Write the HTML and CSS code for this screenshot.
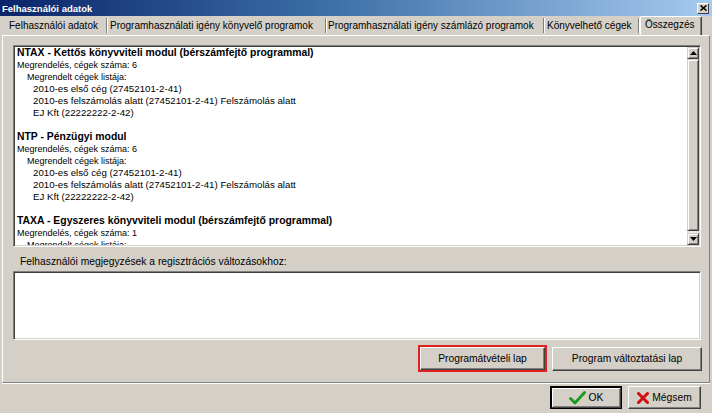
FILE: index.html
```html
<!DOCTYPE html>
<html lang="hu">
<head>
<meta charset="utf-8">
<title>Felhasználói adatok</title>
<link rel="stylesheet" href="styles.css">
</head>
<body>
<div class="window">
  <div class="titlebar">
    <span class="title">Felhasználói adatok</span>
    <span class="close">
      <svg width="7" height="6" viewBox="0 0 7 6"><path d="M0.5 0.5 L6.5 5.5 M6.5 0.5 L0.5 5.5" stroke="#000" stroke-width="1.6"/></svg>
    </span>
  </div>
  <div class="tabstrip">
    <div class="tab t1">Felhasználói adatok</div>
    <div class="tab t2">Programhasználati igény könyvelő programok</div>
    <div class="tab t3">Programhasználati igény számlázó programok</div>
    <div class="tab t4">Könyvelhető cégek</div>
    <div class="tab active">Összegzés</div>
  </div>
  <div class="page">
    <div class="summary">
      <div class="summary-text">
        <div class="line b">NTAX - Kettős könyvviteli modul (bérszámfejtő programmal)</div>
        <div class="line">Megrendelés, cégek száma: 6</div>
        <div class="line i1">Megrendelt cégek listája:</div>
        <div class="line i2">2010-es első cég (27452101-2-41)</div>
        <div class="line i2">2010-es felszámolás alatt (27452101-2-41) Felszámolás alatt</div>
        <div class="line i2">EJ Kft (22222222-2-42)</div>
        <div class="line"></div>
        <div class="line b">NTP - Pénzügyi modul</div>
        <div class="line">Megrendelés, cégek száma: 6</div>
        <div class="line i1">Megrendelt cégek listája:</div>
        <div class="line i2">2010-es első cég (27452101-2-41)</div>
        <div class="line i2">2010-es felszámolás alatt (27452101-2-41) Felszámolás alatt</div>
        <div class="line i2">EJ Kft (22222222-2-42)</div>
        <div class="line"></div>
        <div class="line b">TAXA - Egyszeres könyvviteli modul (bérszámfejtő programmal)</div>
        <div class="line">Megrendelés, cégek száma: 1</div>
        <div class="line i1">Megrendelt cégek listája:</div>
      </div>
      <div class="scrollbar">
        <div class="sbtn"><svg width="7" height="4" viewBox="0 0 7 4"><path d="M3.5 0 L7 4 L0 4 Z" fill="#000"/></svg></div>
        <div class="track"><div class="thumb"></div></div>
        <div class="sbtn"><svg width="7" height="4" viewBox="0 0 7 4"><path d="M0 0 L7 0 L3.5 4 Z" fill="#000"/></svg></div>
      </div>
    </div>
    <div class="note-label">Felhasználói megjegyzések a regisztrációs változásokhoz:</div>
    <div class="note"></div>
    <div class="actions">
      <div class="highlight"><button class="btn wide1">Programátvételi lap</button></div>
      <button class="btn wide2">Program változtatási lap</button>
    </div>
  </div>
  <div class="footer">
    <button class="btn dlg default">
      <svg width="17" height="14" viewBox="0 0 17 14"><path d="M1.5 7.5 L6 12 L15.5 1.5" fill="none" stroke="#1a9a1a" stroke-width="2.8" stroke-linecap="round" stroke-linejoin="round"/></svg>
      <span>OK</span>
    </button>
    <button class="btn dlg">
      <svg width="12" height="12" viewBox="0 0 12 12"><path d="M1.5 1.5 L10.5 10.5 M10.5 1.5 L1.5 10.5" stroke="#d01010" stroke-width="3" stroke-linecap="round"/></svg>
      <span>Mégsem</span>
    </button>
  </div>
</div>
</body>
</html>
```
FILE: styles.css
```css
html, body {
  margin: 0;
  padding: 0;
  background: #d4d0c8;
}
body {
  font-family: Tahoma, "Liberation Sans", Arial, sans-serif;
  color: #000;
}
.window {
  width: 712px;
  height: 413px;
  background: #d4d0c8;
  display: flex;
  flex-direction: column;
  overflow: hidden;
}
.titlebar {
  height: 16px;
  flex: none;
  display: flex;
  align-items: center;
  justify-content: space-between;
  padding: 0 3px 0 2px;
  background: linear-gradient(90deg, #0a246a 0%, #3a6ea5 45%, #a6caf0 100%);
}
.title {
  color: #fff;
  font-weight: bold;
  font-size: 9.5px;
}
.close {
  width: 10px;
  height: 9px;
  background: #d4d0c8;
  display: flex;
  align-items: center;
  justify-content: center;
  border-top: 1px solid #fff;
  border-left: 1px solid #fff;
  border-right: 1px solid #404040;
  border-bottom: 1px solid #404040;
}
.tabstrip {
  height: 19px;
  flex: none;
  display: flex;
  align-items: flex-end;
  padding-left: 2px;
}
.tab {
  box-sizing: border-box;
  height: 15px;
  margin-bottom: 2px;
  font-size: 10px;
  line-height: 15px;
  white-space: nowrap;
  border-right: 1px solid #808080;
  box-shadow: 1px 0 0 #fff;
  padding-left: 3px;
  overflow: hidden;
}
.t1 { width: 105px; padding-left: 7px; }
.t2 { width: 219px; padding-left: 3px; }
.t3 { width: 218px; padding-left: 2px; }
.t4 { width: 95px; padding-left: 3px; }
.tab.active {
  width: 62px;
  height: 19px;
  margin-bottom: 0;
  margin-left: 1px;
  line-height: 15px;
  padding-left: 4px;
  border-top: 1px solid #fff;
  border-left: 1px solid #fff;
  border-right: 1px solid #404040;
  box-shadow: inset -1px 0 0 #808080;
  border-radius: 2px 2px 0 0;
}
.page {
  box-sizing: border-box;
  height: 348px;
  flex: none;
  margin: 0 2px;
  border-top: 1px solid #fff;
  border-left: 1px solid #fff;
  border-right: 1px solid #808080;
  border-bottom: 1px solid #808080;
  box-shadow: 0 1px 0 #fff;
  padding: 9px 8px 0 10px;
  display: flex;
  flex-direction: column;
}
.summary {
  box-sizing: border-box;
  height: 202px;
  flex: none;
  background: #fff;
  border: 1px solid;
  border-color: #808080 #fff #fff #808080;
  box-shadow: inset 1px 1px 0 #404040, inset -1px -1px 0 #d4d0c8;
  padding: 1px;
  display: flex;
}
.summary-text {
  flex: 1;
  overflow: hidden;
  padding-left: 2px;
  font-size: 9px;
}
.line {
  height: 12px;
  line-height: 12px;
  white-space: nowrap;
}
.line.b {
  font-weight: bold;
  font-size: 10.4px;
}
.line.i1 { padding-left: 10px; }
.line.i2 { padding-left: 16px; font-size: 9.7px; }
.scrollbar {
  width: 12px;
  flex: none;
  display: flex;
  flex-direction: column;
}
.sbtn {
  box-sizing: border-box;
  height: 12px;
  flex: none;
  background: #d4d0c8;
  border-top: 1px solid #d4d0c8;
  border-left: 1px solid #d4d0c8;
  border-right: 1px solid #404040;
  border-bottom: 1px solid #404040;
  box-shadow: inset 1px 1px 0 #fff, inset -1px -1px 0 #808080;
  display: flex;
  align-items: center;
  justify-content: center;
}
.track {
  flex: 1;
  background: #ece9e4;
  display: flex;
  flex-direction: column;
  padding: 0 0 2px 0;
}
.thumb {
  flex: 1;
  box-sizing: border-box;
  background: #d4d0c8;
  border-top: 1px solid #d4d0c8;
  border-left: 1px solid #d4d0c8;
  border-right: 1px solid #404040;
  border-bottom: 1px solid #404040;
  box-shadow: inset 1px 1px 0 #fff, inset -1px -1px 0 #808080;
}
.note-label {
  margin-top: 9px;
  height: 12px;
  line-height: 12px;
  padding-left: 7px;
  font-size: 10.3px;
  white-space: nowrap;
}
.note {
  box-sizing: border-box;
  margin-top: 3px;
  height: 69px;
  flex: none;
  background: #fff;
  border: 1px solid;
  border-color: #808080 #fff #fff #808080;
  box-shadow: inset 1px 1px 0 #404040, inset -1px -1px 0 #d4d0c8;
}
.actions {
  margin-top: 5px;
  display: flex;
  justify-content: flex-end;
  align-items: center;
  gap: 5px;
  margin-right: -1px;
}
.highlight {
  border: 2px solid #e32020;
  display: flex;
}
.btn {
  box-sizing: border-box;
  font-family: Tahoma, "Liberation Sans", Arial, sans-serif;
  font-size: 10.3px;
  color: #000;
  background: #d4d0c8;
  border-top: 1px solid #fff;
  border-left: 1px solid #fff;
  border-right: 1px solid #404040;
  border-bottom: 1px solid #404040;
  box-shadow: inset -1px -1px 0 #808080;
  padding: 0;
  margin: 0;
  display: flex;
  align-items: center;
  justify-content: center;
}
.wide1 { width: 125px; height: 23px; }
.wide2 { width: 150px; height: 24px; }
.footer {
  flex: none;
  display: flex;
  justify-content: flex-end;
  gap: 6px;
  padding: 3px 11px 0 0;
}
.btn.dlg {
  width: 73px;
  height: 23px;
  gap: 3px;
  font-size: 10.3px;
}
.btn.default {
  outline: 1px solid #000;
  outline-offset: -1px;
  border: 2px solid;
  border-color: #000 #404040 #404040 #000;
  box-shadow: inset 1px 1px 0 #fff, inset -1px -1px 0 #808080;
  width: 72px;
}
```
